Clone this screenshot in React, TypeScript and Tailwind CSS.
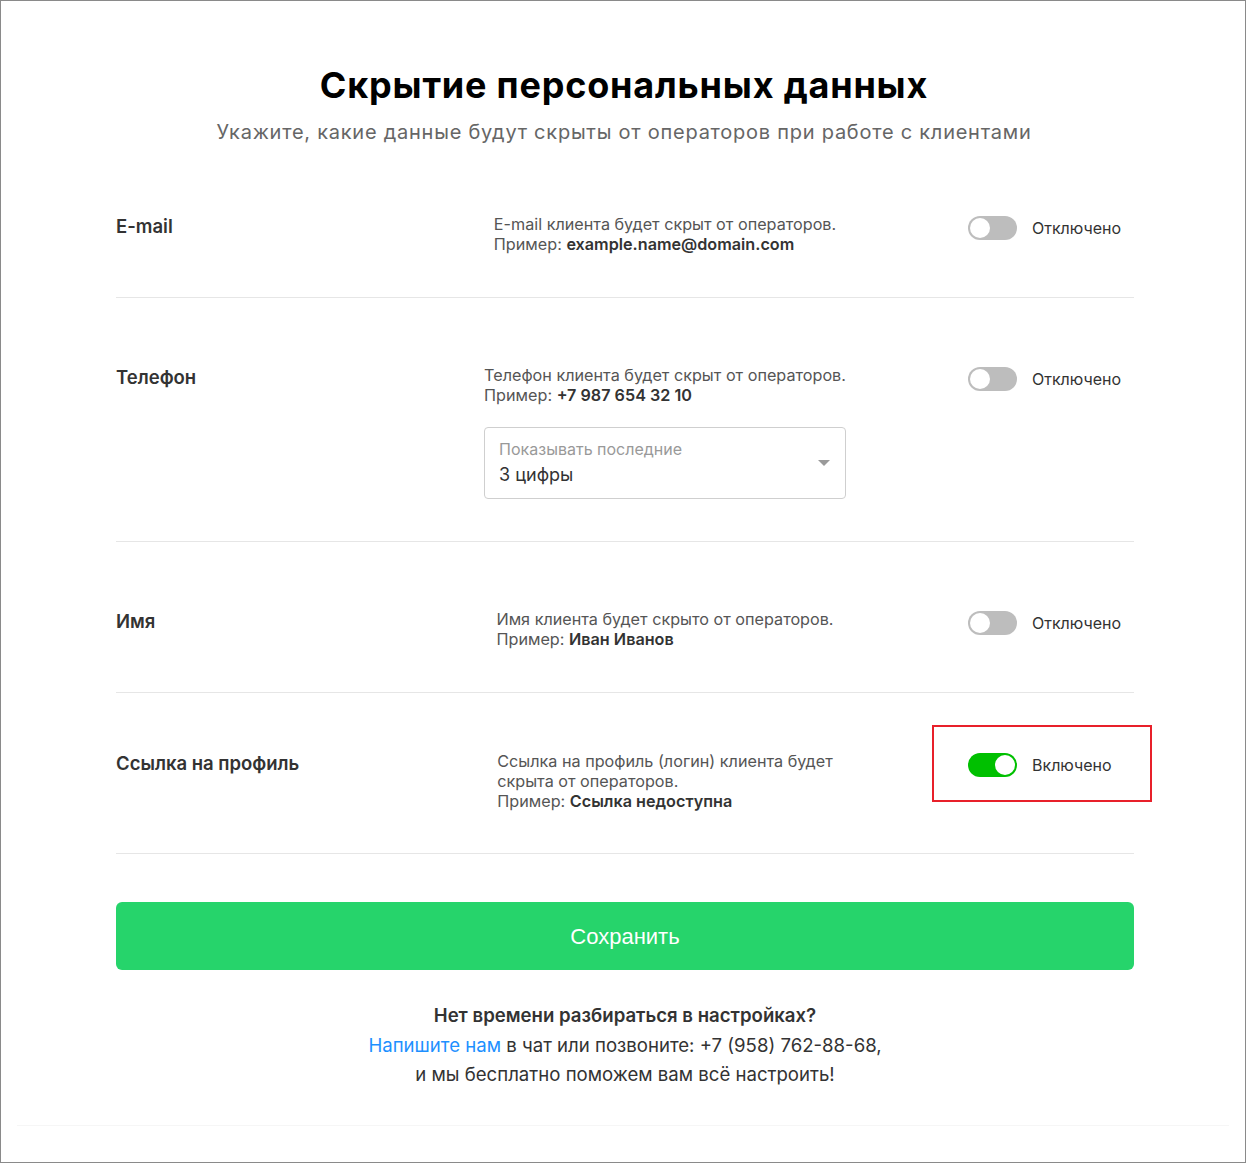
import React from "react";

const body = { fontFamily: "Inter, 'Noto Sans', sans-serif" } as React.CSSProperties;

function Toggle({ on }: { on: boolean }) {
  return (
    <div
      className={`relative h-[24px] w-[49px] shrink-0 rounded-full ${on ? "bg-[#00c000]" : "bg-[#bdbdbd]"}`}
    >
      <div
        className={`absolute top-[2px] h-[20px] w-[20px] rounded-full bg-white ${on ? "left-[27px]" : "left-[2px]"}`}
      />
    </div>
  );
}

function Row({
  label,
  desc,
  pt,
  pb,
  on,
  highlight,
  extra,
}: {
  label: string;
  desc: React.ReactNode;
  pt: string;
  pb: string;
  on: boolean;
  highlight?: boolean;
  extra?: React.ReactNode;
}) {
  return (
    <div className={`flex items-start border-b border-[#e6e6e6] ${pt} ${pb}`}>
      <div className="w-[330px] shrink-0 text-[18.5px] font-semibold leading-[24px] text-[#333]">{label}</div>
      <div className="flex flex-1 justify-center">
        <div className="flex flex-col">
          <div className="text-[16.2px] leading-[20px] text-[#555]">{desc}</div>
          {extra}
        </div>
      </div>
      <div className="w-[250px] shrink-0 pl-[84px] pt-[2px]">
        <div className="relative flex items-center gap-[15px]">
          <Toggle on={on} />
          <span className="text-[16px] leading-[24px] text-[#333]">{on ? "Включено" : "Отключено"}</span>
          {highlight && (
            <div className="pointer-events-none absolute left-[-36px] top-[-28px] h-[77px] w-[220px] border-2 border-[#e8202a]" />
          )}
        </div>
      </div>
    </div>
  );
}

export default function App() {
  return (
    <div className="h-[1164px] w-[1247px] bg-white" style={body}>
      <div className="flex h-[1163px] w-[1246px] flex-col border border-[#8a8a8a]">
        <h1 className="mt-[62px] pl-[2px] text-center text-[36px] font-bold leading-[44px] tracking-[0.8px] text-black">
          Скрытие персональных данных
        </h1>
        <p className="mt-[11px] pl-[2px] text-center text-[20px] leading-[28px] tracking-[0.75px] text-[#666]">
          Укажите, какие данные будут скрыты от операторов при работе с клиентами
        </p>

        <div className="ml-[115px] mt-[68px] w-[1018px]">
          <Row
            label="E-mail"
            pt="pt-0"
            pb="pb-[43px]"
            on={false}
            desc={
              <>
                E-mail клиента будет скрыт от операторов.
                <br />
                Пример: <span className="font-semibold text-[#333]">example.name@domain.com</span>
              </>
            }
          />
          <Row
            label="Телефон"
            pt="pt-[67px]"
            pb="pb-[42px]"
            on={false}
            desc={
              <>
                Телефон клиента будет скрыт от операторов.
                <br />
                Пример: <span className="font-semibold text-[#333]">+7 987 654 32 10</span>
              </>
            }
            extra={
              <div className="relative mt-[22px] flex h-[72px] flex-col justify-center rounded-[4px] border border-[#cfcfcf] px-[14px]">
                <span className="text-[16px] leading-[20px] text-[#999]">Показывать последние</span>
                <span className="mt-[4px] text-[18px] leading-[24px] text-[#333]">3 цифры</span>
                <svg className="absolute right-[15px] top-[32px]" width="12" height="6" viewBox="0 0 12 6">
                  <path d="M0 0 L12 0 L6 6 Z" fill="#9a9a9a" />
                </svg>
              </div>
            }
          />
          <Row
            label="Имя"
            pt="pt-[67px]"
            pb="pb-[43px]"
            on={false}
            desc={
              <>
                Имя клиента будет скрыто от операторов.
                <br />
                Пример: <span className="font-semibold text-[#333]">Иван Иванов</span>
              </>
            }
          />
          <Row
            label="Ссылка на профиль"
            pt="pt-[58px]"
            pb="pb-[42px]"
            on={true}
            highlight
            desc={
              <>
                Ссылка на профиль (логин) клиента будет
                <br />
                скрыта от операторов.
                <br />
                Пример: <span className="font-semibold text-[#333]">Ссылка недоступна</span>
              </>
            }
          />

          <button
            className="mt-[48px] flex h-[68px] w-full items-center justify-center rounded-[6px] bg-[#26d46b] text-[22px] text-white"
            style={{ fontFamily: "'Liberation Sans', Arial, sans-serif" }}
          >
            Сохранить
          </button>

          <div className="mt-[31px] text-center text-[18.6px] leading-[29.5px] text-[#333]">
            <div className="font-semibold">Нет времени разбираться в настройках?</div>
            <div>
              <span className="text-[#1e90ff]">Напишите нам</span> в чат или позвоните: +7 (958) 762-88-68,
            </div>
            <div>и мы бесплатно поможем вам всё настроить!</div>
          </div>
        </div>
        <div className="ml-[16px] mt-[35px] w-[1212px] border-t border-[#f6f6f6]" />
      </div>
    </div>
  );
}
